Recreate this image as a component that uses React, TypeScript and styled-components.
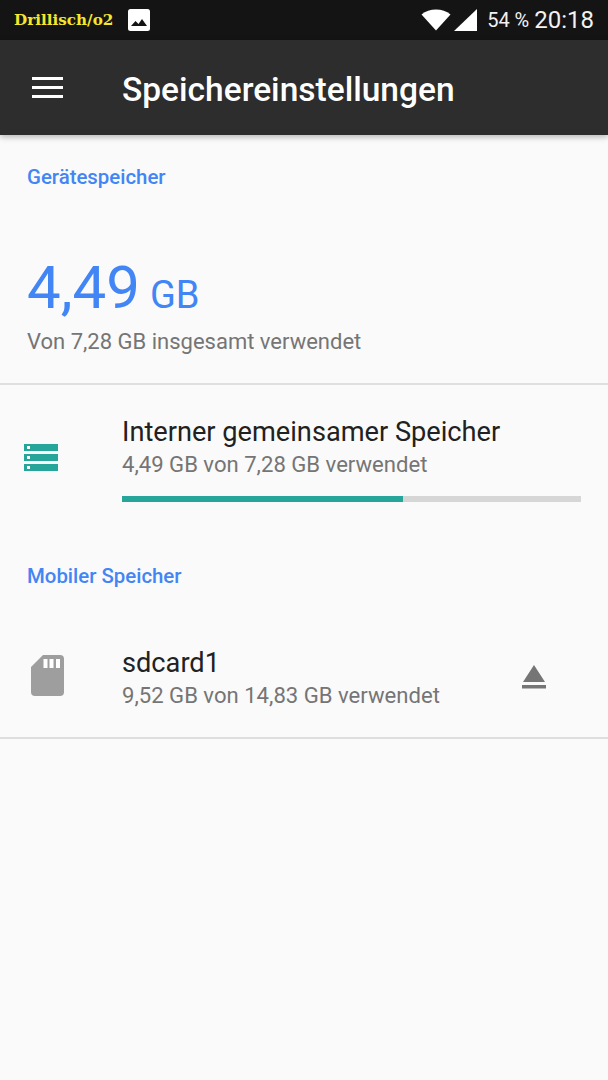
import React from 'react'
import styled, { createGlobalStyle } from 'styled-components'

const Global = createGlobalStyle`
  html, body {
    margin: 0;
    padding: 0;
    background: #fafafa;
  }
  body {
    font-family: Roboto, "Liberation Sans", sans-serif;
  }
`

const Page = styled.div`
  width: 608px;
  height: 1080px;
  overflow: hidden;
  background: #fafafa;
`

const StatusBar = styled.div`
  height: 40px;
  background: #141414;
  display: flex;
  align-items: center;
  padding: 0 14px 0 14px;
  box-sizing: border-box;
`

const Carrier = styled.span`
  width: 113px;
  font-family: "DejaVu Serif", "Liberation Serif", serif;
  font-weight: 700;
  font-size: 15.2px;
  white-space: nowrap;
  color: #f5e72c;
`

const StatusRight = styled.div`
  margin-left: auto;
  display: flex;
  align-items: center;
`

const Battery = styled.span`
  font-size: 20px;
  color: #f2f2f2;
  margin-left: 9px;
`

const Clock = styled.span`
  font-size: 24px;
  color: #f2f2f2;
  margin-left: 5px;
`

const AppBar = styled.header`
  height: 95px;
  background: #2d2d2d;
  display: flex;
  align-items: center;
  padding: 0 32px;
  box-sizing: border-box;
  box-shadow: 0 2px 6px rgba(0, 0, 0, 0.28);
  position: relative;
`

const Title = styled.h1`
  margin: 0 0 0 59px;
  padding-top: 4px;
  font-size: 33.5px;
  font-weight: 500;
  color: #fff;
`

const SectionLabel = styled.div<{ $top: number; $bottom: number }>`
  font-size: 20.4px;
  font-weight: 500;
  color: #4285f4;
  line-height: 24px;
  padding: ${p => p.$top}px 27px 0;
  margin-bottom: ${p => p.$bottom}px;
`

const Summary = styled.section`
  padding: 0 27px 27px;
  border-bottom: 2px solid #dedede;
`

const BigValue = styled.div`
  color: #4285f4;
  display: flex;
  align-items: baseline;
  line-height: 62px;
`

const BigNumber = styled.span`
  font-size: 60px;
  margin-right: 10px;
`

const BigUnit = styled.span`
  font-size: 38px;
`

const SummaryText = styled.div`
  font-size: 22px;
  color: #757575;
  line-height: 28px;
  margin-top: 2px;
`

const Row = styled.div<{ $divider?: boolean }>`
  display: flex;
  align-items: center;
  padding: 0 27px 0 24px;
  border-bottom: ${p => (p.$divider ? '2px solid #dedede' : 'none')};
`

const IconSlot = styled.div`
  width: 98px;
  flex: none;
  display: flex;
  align-items: center;
`

const RowBody = styled.div`
  flex: 1;
`

const RowTitle = styled.div`
  font-size: 27.2px;
  color: #212121;
  line-height: 32px;
`

const RowSub = styled.div`
  font-size: 22.1px;
  color: #757575;
  line-height: 28px;
  margin-top: 2px;
`

const Track = styled.div`
  height: 6px;
  background: #d6d6d6;
  margin-top: 18px;
`

const Fill = styled.div`
  height: 100%;
  background: #26a69a;
`

const InternalRow = styled(Row)`
  padding-top: 31px;
  align-items: flex-start;
`

const InternalIcon = styled(IconSlot)`
  padding-top: 28px;
`

const CardRow = styled(Row)`
  padding: 59px 27px 28px 24px;
`

const CardIcon = styled(IconSlot)`
  margin-bottom: 6px;
`

const EjectSlot = styled.div`
  width: 40px;
  display: flex;
  justify-content: center;
  margin: 0 27px 2px 0;
`

export default function App() {
  const used = 4.49
  const total = 7.28
  return (
    <Page>
      <Global />
      <StatusBar>
        <Carrier>Drillisch/o2</Carrier>
        <svg width="24" height="24" viewBox="0 0 24 24">
          <rect x="1" y="1" width="22" height="22" rx="2.5" fill="#fff" />
          <path d="M4 18l4.500-5 3 3 3.500-5 5 7z" fill="#141414" />
        </svg>
        <StatusRight>
          <svg width="30" height="24" viewBox="0 0 30 24">
            <path d="M15 22.500L.5 6.500C4.500 3 9.500 1.500 15 1.500s10.500 1.500 14.500 5z" fill="#fff" />
          </svg>
          <svg width="25" height="24" viewBox="0 0 25 24" style={{ marginLeft: 2 }}>
            <path d="M24 1v22H1z" fill="#fff" />
          </svg>
          <Battery>54 %</Battery>
          <Clock>20:18</Clock>
        </StatusRight>
      </StatusBar>
      <AppBar>
        <svg width="31" height="22" viewBox="0 0 31 22">
          <path d="M0 0h31v3H0zM0 9h31v3H0zM0 18h31v3H0z" fill="#fff" />
        </svg>
        <Title>Speichereinstellungen</Title>
      </AppBar>
      <SectionLabel $top={30} $bottom={68}>Gerätespeicher</SectionLabel>
      <Summary>
        <BigValue>
          <BigNumber>4,49</BigNumber>
          <BigUnit>GB</BigUnit>
        </BigValue>
        <SummaryText>Von 7,28 GB insgesamt verwendet</SummaryText>
      </Summary>
      <InternalRow>
        <InternalIcon>
          <svg width="34" height="28" viewBox="0 0 34 28">
            <path d="M0 0h34v7H0zM0 10h34v7H0zM0 20h34v7H0z" fill="#26a69a" />
            <path d="M3 2h3v3H3zM3 12h3v3H3zM3 22h3v3H3z" fill="#fff" />
          </svg>
        </InternalIcon>
        <RowBody>
          <RowTitle>Interner gemeinsamer Speicher</RowTitle>
          <RowSub>4,49 GB von 7,28 GB verwendet</RowSub>
          <Track>
            <Fill style={{ width: `${(used / total) * 100 - 0.5}%` }} />
          </Track>
        </RowBody>
      </InternalRow>
      <SectionLabel $top={62} $bottom={0}>Mobiler Speicher</SectionLabel>
      <CardRow $divider>
        <CardIcon>
          <svg width="33" height="41" viewBox="0 0 33 41" style={{ marginLeft: 7 }}>
            <path d="M12 0h17a4 4 0 0 1 4 4v33a4 4 0 0 1-4 4H4a4 4 0 0 1-4-4V12z" fill="#9e9e9e" />
            <path d="M12.500 4h4v9h-4zM18.500 4h4v9h-4zM25 4h4v9h-4z" fill="#fff" />
          </svg>
        </CardIcon>
        <RowBody>
          <RowTitle>sdcard1</RowTitle>
          <RowSub>9,52 GB von 14,83 GB verwendet</RowSub>
        </RowBody>
        <EjectSlot>
          <svg width="24" height="24" viewBox="0 0 24 24">
            <path d="M12 0l11 17H1zM0 20h24v3.500H0z" fill="#757575" />
          </svg>
        </EjectSlot>
      </CardRow>
    </Page>
  )
}
